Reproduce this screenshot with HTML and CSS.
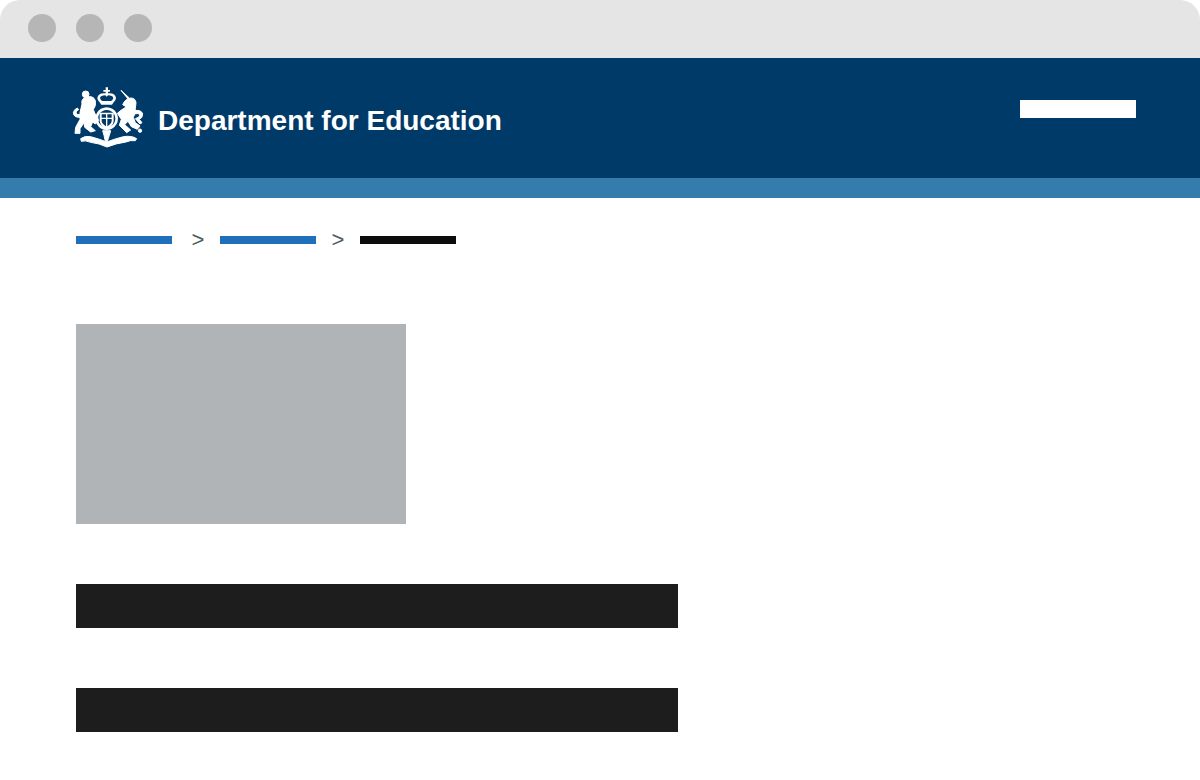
FILE: index.html
```html
<!DOCTYPE html>
<html lang="en">
<head>
  <meta charset="UTF-8" />
  <title>Department for Education</title>
  <link rel="stylesheet" href="styles.css">
</head>
<body>

  <div class="window-bar">
    <span class="dot"></span>
    <span class="dot"></span>
    <span class="dot"></span>
  </div>

  <header class="site-header">
    <div class="brand">
      <svg class="crest" viewBox="36 21 216 186" width="72" height="62" fill="#fff" aria-hidden="true">
        <g stroke="#fff" stroke-width="3" stroke-linejoin="round">
          <!-- lion -->
          <circle cx="77" cy="43" r="10" />
          <path d="M66 72 Q62 56 80 51 Q100 46 106 62 Q109 78 100 88 Q102 100 112 110 L116 122 L106 132 L98 126 L92 140 L106 152 L92 156 L74 142 L72 128 L60 146 L60 160 L45 160 L47 142 L60 118 L60 98 Z" />
          <path d="M60 112 Q40 112 40 98 Q42 88 52 84 L56 89 Q48 92 48 99 Q50 105 62 104 Z" />
          <!-- unicorn -->
          <path d="M183 31 L208 54 L205 58 Z" />
          <path d="M188 74 Q196 56 212 54 Q226 54 228 68 L226 86 Q228 100 220 112 L226 128 L240 138 L232 148 L214 140 L204 124 L194 134 L212 150 L200 158 L178 136 L184 118 L172 100 L184 90 L194 84 L198 80 Z" />
          <path d="M222 92 Q244 88 248 102 Q248 114 238 118 L246 128 L240 132 L226 116 Q240 112 240 104 Q236 98 222 102 Z" />
          <circle cx="240" cy="152" r="5" />
          <!-- motto ribbon -->
          <path d="M62 176 Q76 166 92 170 Q122 178 140 186 Q160 178 190 170 Q214 166 230 176 L226 182 Q210 180 198 186 Q168 190 141 201 Q118 190 92 187 Q76 180 64 184 Z" />
          <path d="M128 152 L152 152 L148 166 L142 184 L136 184 L132 166 Z" />
        </g>
        <!-- crown -->
        <path d="M137 22 H144 V30 H150 V35 H144 V40 Q166 38 168 54 Q168 62 160 68 L156 74 H124 L120 68 Q112 62 112 54 Q114 38 137 40 V35 H130 V30 H137 Z M120 54 Q122 61 127 63 H153 Q158 61 160 54 Q158 46 144 46 L140 50 L136 46 Q122 46 120 54 Z" fill-rule="evenodd" />
        <!-- shield -->
        <path d="M140 82 A34 34 0 1 1 139.9 82 Z M140 90 A26 26 0 1 0 140.1 90 Z" fill-rule="evenodd" />
        <path d="M119 98 H161 V124 Q158 141 140 147 Q122 141 119 124 Z M125 103 V113 H138 V103 Z M142 103 V113 H155 V103 Z M125 117 V124 Q126 132 138 139 V117 Z M142 117 V139 Q154 132 155 124 V117 Z" fill-rule="evenodd" />
      </svg>
      <span class="brand-name">Department for Education</span>
    </div>
    <div class="header-link"></div>
  </header>
  <div class="header-strip"></div>

  <main class="content">
    <nav class="breadcrumb">
      <span class="crumb crumb-link crumb-first"></span>
      <span class="crumb-sep">&gt;</span>
      <span class="crumb crumb-link"></span>
      <span class="crumb-sep">&gt;</span>
      <span class="crumb crumb-current"></span>
    </nav>

    <div class="image-block"></div>
    <div class="text-bar"></div>
    <div class="text-bar"></div>
  </main>

</body>
</html>
```

FILE: styles.css
```css
body {
  font-family: "Liberation Sans", Arial, sans-serif;
  background: #fff;
  margin: 0;
  padding: 0;
  height: 780px;
  overflow: hidden;
}

.window-bar {
  display: flex;
  gap: 20px;
  box-sizing: border-box;
  height: 58px;
  padding: 14px 0 0 28px;
  background-color: #e5e5e5;
  border-radius: 20px 20px 0 0;
}

.dot {
  width: 28px;
  height: 28px;
  border-radius: 50%;
  background-color: #b6b6b6;
}

.site-header {
  display: flex;
  align-items: center;
  justify-content: space-between;
  height: 120px;
  padding: 0 64px 0 72px;
  background-color: #003a69;
}

.brand {
  display: flex;
  align-items: center;
  gap: 14px;
}

.crest {
  display: block;
}

.brand-name {
  margin-top: 6px;
  color: #fff;
  font-size: 28px;
  font-weight: bold;
}

.header-link {
  width: 116px;
  height: 18px;
  margin-bottom: 18px;
  background-color: #fff;
}

.header-strip {
  height: 20px;
  background-color: #347cac;
}

.content {
  padding: 32px 76px 0;
}

.breadcrumb {
  display: flex;
  align-items: center;
  height: 20px;
  margin-bottom: 74px;
}

.crumb {
  width: 96px;
  height: 8px;
}

.crumb-first {
  margin-right: 4px;
}

.crumb-link {
  background-color: #1f70b8;
}

.crumb-current {
  background-color: #0b0c0c;
}

.crumb-sep {
  width: 44px;
  color: #505a5f;
  font-size: 22px;
  line-height: 20px;
  text-align: center;
}

.image-block {
  width: 330px;
  height: 200px;
  margin-bottom: 60px;
  background-color: #b1b4b6;
}

.text-bar {
  width: 602px;
  height: 44px;
  margin-bottom: 60px;
  background-color: #1c1d1c;
}
```
